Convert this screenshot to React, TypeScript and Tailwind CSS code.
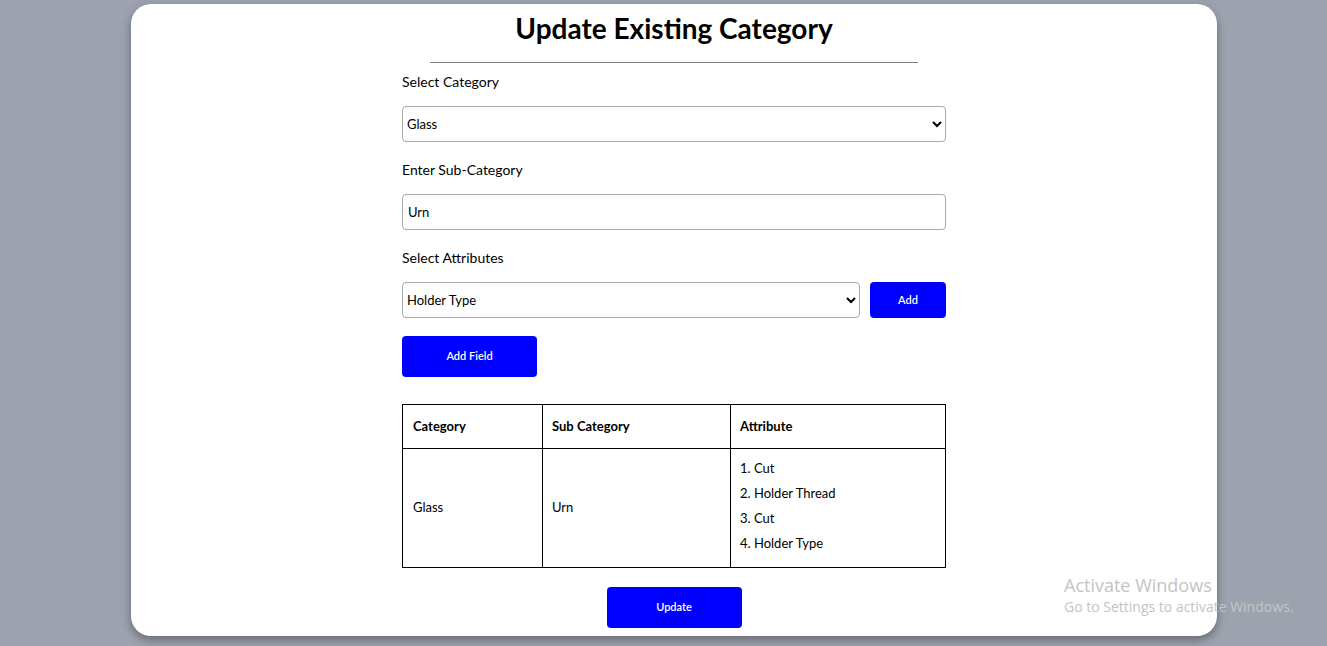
import { useState } from "react";

const labelClassName = "block text-[14px] leading-[18px] text-black";
const fieldClassName =
  "h-[36px] w-full rounded-[4px] border border-[#a9a9a9] bg-white text-[13px] text-black outline-none";
const blueButton =
  "rounded-[4px] bg-[#0000ff] text-[11px] font-semibold text-white";

const attributes = ["Cut", "Holder Thread", "Cut", "Holder Type"];

export default function App() {
  const [category, setCategory] = useState("Glass");
  const [sub, setSub] = useState("Urn");
  const [attr, setAttr] = useState("Holder Type");

  return (
    <div className="relative h-[646px] overflow-hidden bg-[#9ca3af] pt-[4px] font-['Lato',sans-serif]">
      <div className="ml-[131px] flex h-[632px] w-[1086px] flex-col items-center rounded-[20px] bg-white shadow-[0_4px_10px_rgba(0,0,0,0.35)]">
        <h1 className="mt-[7px] shrink-0 text-[28px] font-bold leading-[34px] text-black">
          Update Existing Category
        </h1>
        <div className="mt-[17px] h-px w-[488px] shrink-0 bg-[#808080]" />

        <div className="w-[544px] shrink-0">
          <label className={`${labelClassName} mt-[10px]`}>Select Category</label>
          <select
            value={category}
            onChange={(e) => setCategory(e.target.value)}
            className={`${fieldClassName} mt-[15px]`}
          >
            <option>Glass</option>
            <option>Metal</option>
          </select>

          <label className={`${labelClassName} mt-[19px]`}>Enter Sub-Category</label>
          <input
            value={sub}
            onChange={(e) => setSub(e.target.value)}
            className={`${fieldClassName} mt-[15px] px-[5px]`}
          />

          <label className={`${labelClassName} mt-[19px]`}>Select Attributes</label>
          <div className="mt-[15px] flex gap-[10px]">
            <select
              value={attr}
              onChange={(e) => setAttr(e.target.value)}
              className={`${fieldClassName} flex-1`}
            >
              <option>Cut</option>
              <option>Holder Thread</option>
              <option>Holder Type</option>
            </select>
            <button type="button" className={`${blueButton} h-[36px] w-[76px]`}>
              Add
            </button>
          </div>

          <button type="button" className={`${blueButton} mt-[18px] h-[41px] w-[135px]`}>
            Add Field
          </button>

          <table className="mt-[27px] w-full border-collapse text-[13px] text-black">
            <thead>
              <tr className="h-[44px]">
                <th className="w-[140px] border border-black px-[10px] text-left font-bold">Category</th>
                <th className="w-[188px] border border-black px-[9px] text-left font-bold">Sub Category</th>
                <th className="border border-black px-[9px] text-left font-bold">Attribute</th>
              </tr>
            </thead>
            <tbody>
              <tr>
                <td className="border border-black px-[10px]">{category}</td>
                <td className="border border-black px-[9px]">{sub}</td>
                <td className="border border-black px-[9px] pb-[10px] pt-[8px]">
                  <ol>
                    {attributes.map((a, i) => (
                      <li key={i} className="h-[25px] leading-[22px]">
                        {i + 1}. {a}
                      </li>
                    ))}
                  </ol>
                </td>
              </tr>
            </tbody>
          </table>

          <div className="mt-[19px] flex justify-center">
            <button type="button" className={`${blueButton} h-[41px] w-[135px]`}>
              Update
            </button>
          </div>
        </div>
      </div>

      <div className="pointer-events-none absolute left-[1064px] top-[573px] font-['Open_Sans',sans-serif] text-[#c4c4c4]">
        <div className="text-[18px] leading-[24px]">Activate Windows</div>
        <div className="text-[14px] leading-[20px]">Go to Settings to activate Windows.</div>
      </div>
    </div>
  );
}
